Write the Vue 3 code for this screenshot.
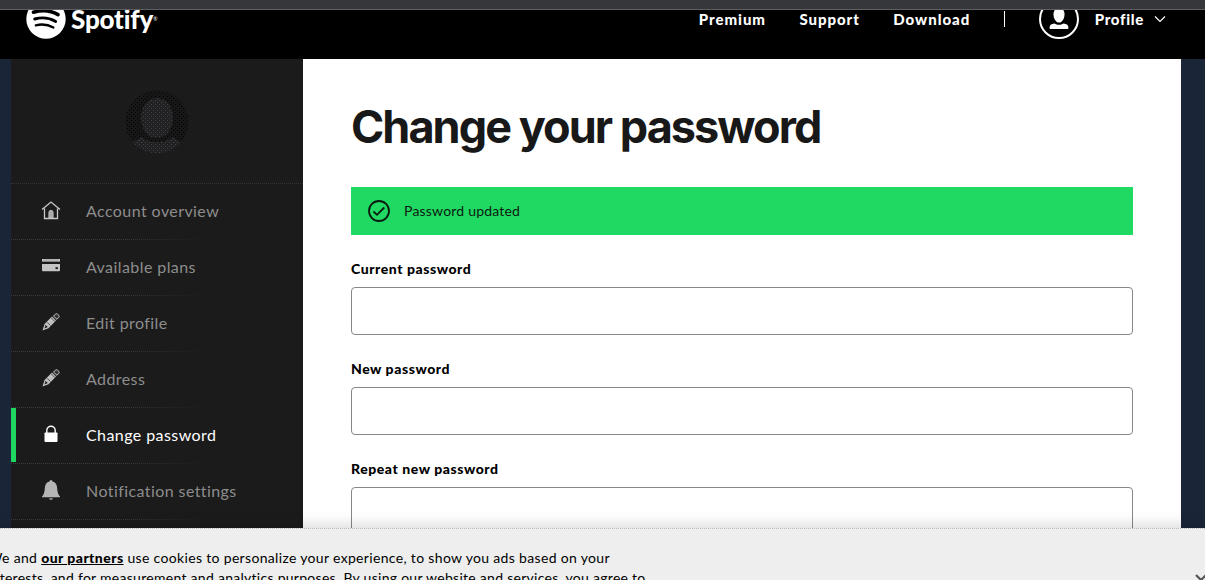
<template>
  <div class="page">
    <div class="browser-edge"></div>
    <header class="header">
      <div class="header-row">
        <a class="logo">
          <svg class="logo-mark" viewBox="0 0 40 40">
            <circle cx="20" cy="20" r="19.7" fill="#fff" />
            <g fill="none" stroke="#000" stroke-linecap="round">
              <path d="M7.5 13.2c8.200-2.300 17.500-1.600 24.500 2.400" stroke-width="3.600" />
              <path d="M8.700 20c7.300-2 14.800-1.200 21 2.400" stroke-width="2.900" />
              <path d="M9.800 26.300c6.200-1.400 12.200-.8 17.600 2.200" stroke-width="2.400" />
            </g>
          </svg>
          <span class="logo-name">Spotify</span>
          <span class="logo-reg">®</span>
        </a>
        <nav class="nav">
          <a class="nav-link">Premium</a>
          <a class="nav-link">Support</a>
          <a class="nav-link">Download</a>
          <span class="divider"></span>
          <svg class="user" viewBox="0 0 40 40">
            <circle cx="20" cy="20" r="19" fill="none" stroke="#fff" stroke-width="2" />
            <path d="M20 9c-3.500 0-5.500 2.600-5.500 6.200 0 4.500 2.300 8.300 5.500 8.300s5.500-3.800 5.500-8.300c0-3.600-2-6.200-5.500-6.200z" fill="#fff" />
            <path d="M10.500 29c0-3 1.500-4.300 5-4.600 2.500 1.700 6.500 1.700 9 0 3.500.3 5 1.600 5 4.600 0 .5-.4.900-.9.900H11.400c-.5 0-.9-.4-.9-.9z" fill="#fff" />
          </svg>
          <a class="nav-profile">Profile</a>
          <svg class="chevron" viewBox="0 0 12 8">
            <path d="M1 1.500l5 5 5-5" fill="none" stroke="#fff" stroke-width="1.200" />
          </svg>
        </nav>
      </div>
    </header>

    <main class="main">
      <aside class="sidebar">
        <div class="avatar-box">
          <svg class="avatar" viewBox="0 0 64 64">
            <defs>
              <clipPath id="avatar-clip"><circle cx="32" cy="32" r="31.500" /></clipPath>
              <pattern id="dark-dots" width="4" height="4" patternUnits="userSpaceOnUse">
                <rect width="4" height="4" fill="#171717" />
                <path d="M0 0h1v1H0zM2 2h1v1H2z" fill="#020202" />
              </pattern>
              <pattern id="light-dots" width="4" height="4" patternUnits="userSpaceOnUse">
                <rect width="4" height="4" fill="#212123" />
                <path d="M0 0h1v1H0zM2 2h1v1H2z" fill="#424347" />
              </pattern>
            </defs>
            <g clip-path="url(#avatar-clip)">
              <rect width="64" height="64" fill="url(#dark-dots)" />
              <ellipse cx="32" cy="28" rx="16" ry="20" fill="url(#light-dots)" />
              <path d="M6 53l11-6c7 7 23 7 30 0l11 6v11H6z" fill="url(#light-dots)" />
            </g>
          </svg>
        </div>
        <ul class="menu">
          <li v-for="item in menu" :key="item.label" :class="['menu-item', { active: item.active }]">
            <svg v-if="item.icon === 'home'" class="icon" viewBox="0 0 20 20">
              <path d="M1 9.500l9-7.500 9 7.500M3.500 8.500v10h13v-10" fill="none" stroke="#c8c8c8" stroke-width="1.300" />
              <path d="M7.800 18v-5.500a2.200 2.200 0 0 1 4.400 0V18z" fill="#aaa" stroke="#c8c8c8" stroke-width=".7" />
            </svg>
            <svg v-else-if="item.icon === 'card'" class="icon" viewBox="0 0 20 20">
              <path d="M1 3h18v2.600H1z" fill="#ccc" />
              <path d="M1 8h18v6.200a1 1 0 0 1-1 1H2a1 1 0 0 1-1-1z" fill="#c4c4c4" />
              <path d="M14.500 11.200h2.400v1.900h-2.400z" fill="#1a1a1a" />
              <path d="M3 3v2.600M5 3v2.600M7 3v2.600M9 3v2.600M11 3v2.600M13 3v2.600M15 3v2.600M17 3v2.600" stroke="#888" stroke-width=".7" />
            </svg>
            <svg v-else-if="item.icon === 'pencil'" class="icon" viewBox="0 0 20 20">
              <path d="M1.500 18.500l2-6.500 7.500-7.500 4 4-7.500 7.700z" fill="#c0c0c0" />
              <path d="M3.500 16.500l1-3.700 2.400 2.200z" fill="#292929" />
              <path d="M12.500 4l2-1.800c1.500-1.400 4.600 1.500 3.300 3.100L16 7.300z" fill="#333" stroke="#c8c8c8" />
              <path d="M6.200 10.300l3.200 3.200M10.300 6l3.600 3.600" stroke="#444" stroke-width=".9" />
            </svg>
            <svg v-else-if="item.icon === 'lock'" class="icon" viewBox="0 0 20 20">
              <path d="M5.800 9V6.500a4.200 4.200 0 0 1 8.400 0V9" fill="none" stroke="#fff" stroke-width="1.400" />
              <rect x="3.500" y="8.500" width="13" height="9.500" rx=".8" fill="#fff" />
            </svg>
            <svg v-else class="icon bell" viewBox="0 0 20 22">
              <path d="M8.500 2.500a1.500 1.500 0 0 1 3 0c3 .8 4.500 3 4.700 7 .2 4 1.300 6.500 2.800 8v.8H1v-.8c1.500-1.500 2.600-4 2.800-8 .2-4 1.700-6.200 4.700-7z" fill="#b5b5b5" />
              <path d="M8 19.200h4c0 2.300-4 2.300-4 0z" fill="#999" />
            </svg>
            <span class="menu-label">{{ item.label }}</span>
          </li>
        </ul>
      </aside>

      <section class="content">
        <h1>Change your password</h1>
        <div class="notice">
          <svg class="check" viewBox="0 0 22 22">
            <circle cx="11" cy="11" r="10" fill="none" stroke="#0b1a10" stroke-width="1.800" />
            <path d="M5.500 11.500l3.500 3.300 7.300-7.300" fill="none" stroke="#0b1a10" stroke-width="1.800" />
          </svg>
          <span class="notice-text">Password updated</span>
        </div>
        <div v-for="field in fields" :key="field.name" class="field">
          <label :for="field.name">{{ field.label }}</label>
          <input :id="field.name" v-model="field.value" type="password" />
        </div>
      </section>
    </main>

    <footer class="cookies">
      <p class="cookie-text">
        <span class="line">We and <a>our partners</a> use cookies to personalize your experience, to show you ads based on your</span>
        <span class="line second">interests, and for measurement and analytics purposes. By using our website and services, you agree to</span>
      </p>
      <svg class="close" viewBox="0 0 12 12">
        <path d="M1 1l10 10M11 1L1 11" stroke="#555" stroke-width="2.200" />
      </svg>
    </footer>
  </div>
</template>

<script setup>
import { ref } from "vue";

const menu = [
  { label: "Account overview", icon: "home" },
  { label: "Available plans", icon: "card" },
  { label: "Edit profile", icon: "pencil" },
  { label: "Address", icon: "pencil" },
  { label: "Change password", icon: "lock", active: true },
  { label: "Notification settings", icon: "bell" },
];

const fields = ref([
  { name: "current", label: "Current password", value: "" },
  { name: "new", label: "New password", value: "" },
  { name: "repeat", label: "Repeat new password", value: "" },
]);
</script>

<style>
body {
  margin: 0;
  overflow: hidden;
}
</style>

<style scoped>
* {
  box-sizing: border-box;
  margin: 0;
  padding: 0;
}

svg {
  display: block;
  flex: none;
}

.page {
  display: flex;
  flex-direction: column;
  height: 580px;
  overflow: hidden;
  background: #1a2538;
  font-family: Lato, "Liberation Sans", sans-serif;
  white-space: nowrap;
}

.browser-edge {
  flex: none;
  height: 10px;
  background: #36373b;
  border-bottom: 1px solid #5f6063;
}

.header {
  flex: none;
  height: 49px;
  overflow: hidden;
  background: #000;
  color: #fff;
}

.header-row {
  display: flex;
  justify-content: space-between;
  height: 40px;
  margin-top: -11px;
  padding: 0 39px 0 26px;
}

.logo,
.nav {
  display: flex;
  align-items: center;
}

.logo-mark {
  width: 40px;
  height: 40px;
}

.logo-name {
  margin-left: 5px;
  font-size: 26px;
  font-weight: 900;
  line-height: 26px;
  letter-spacing: -0.2px;
}

.logo-reg {
  font-size: 5px;
}

.nav {
  font-size: 15px;
  font-weight: 900;
  letter-spacing: 0.95px;
}

.nav-link {
  margin-right: 33.5px;
}

.divider {
  width: 1px;
  height: 16px;
  margin-right: 34px;
  background: #fff;
}

.user {
  width: 40px;
  height: 40px;
  margin-right: 16px;
}

.nav-profile {
  letter-spacing: 0.7px;
}

.chevron {
  width: 12px;
  height: 8px;
  margin-left: 10px;
}

.main {
  display: flex;
  flex: 1;
  min-height: 0;
  overflow: hidden;
  padding: 0 24px 0 11px;
}

.sidebar {
  flex: none;
  width: 292px;
  height: 470px;
  background: #1b1b1b;
}

.avatar-box {
  display: flex;
  justify-content: center;
  height: 125px;
  padding-top: 31px;
  border-bottom: 1px dotted #343434;
}

.avatar {
  width: 64px;
  height: 64px;
}

.menu {
  list-style: none;
}

.menu-item {
  display: flex;
  align-items: center;
  height: 56px;
  padding-left: 30px;
  color: #8d8d8d;
  font-size: 16px;
  letter-spacing: 0.42px;
  background: linear-gradient(90deg, transparent 40%, #1b1b1b 68%) bottom / 100% 1px no-repeat,
    repeating-linear-gradient(90deg, #3a3a3a 0 1px, #1b1b1b 1px 2px) bottom / 100% 1px no-repeat;
}

.menu-item.active {
  position: relative;
  color: #fff;
}

.menu-item.active::before {
  content: "";
  position: absolute;
  top: 0;
  left: 0;
  width: 5px;
  height: 54px;
  background: #1ed760;
}

.icon {
  width: 20px;
  height: 20px;
  margin-right: 25px;
  margin-bottom: 4px;
}

.bell {
  height: 22px;
}

.menu-label {
  margin-bottom: 4px;
}

.content {
  flex: 1;
  height: 600px;
  padding: 38px 48px 0;
  background: #fff;
}

h1 {
  height: 60px;
  color: #181818;
  font-family: Inter, sans-serif;
  font-size: 45px;
  font-weight: 700;
  line-height: 60px;
  letter-spacing: -1.95px;
}

.notice {
  display: flex;
  align-items: center;
  gap: 14px;
  height: 48px;
  margin-top: 30px;
  padding-left: 17px;
  background: #20d962;
  color: #0b1a10;
  font-size: 14px;
  letter-spacing: 0.2px;
}

.notice-text {
  margin-bottom: 2px;
}

.check {
  width: 22px;
  height: 22px;
}

.field {
  height: 100px;
  padding-top: 24px;
}

label {
  display: block;
  height: 28px;
  color: #000;
  font-size: 14px;
  font-weight: 900;
  line-height: 20px;
  letter-spacing: 0.56px;
}

input {
  display: block;
  width: 100%;
  height: 48px;
  background: transparent;
  border: 1px solid #878787;
  border-radius: 4px;
  outline: none;
}

.cookies {
  position: relative;
  flex: none;
  height: 52px;
  padding-top: 19px;
  overflow: hidden;
  background: #eee;
  box-shadow: 0 -3px 14px rgba(0, 0, 0, 0.15);
  border-top: 1px dotted #bbb;
}

.cookie-text {
  margin-left: -12px;
  color: #000;
  font-size: 14px;
  line-height: 20px;
  letter-spacing: 0.33px;
}

.cookie-text a {
  font-weight: 900;
  letter-spacing: 0.45px;
  text-decoration: underline;
}

.line {
  display: block;
}

.second {
  letter-spacing: 0.28px;
}

.close {
  position: absolute;
  left: 1195px;
  top: 45px;
  width: 12px;
  height: 12px;
}
</style>
